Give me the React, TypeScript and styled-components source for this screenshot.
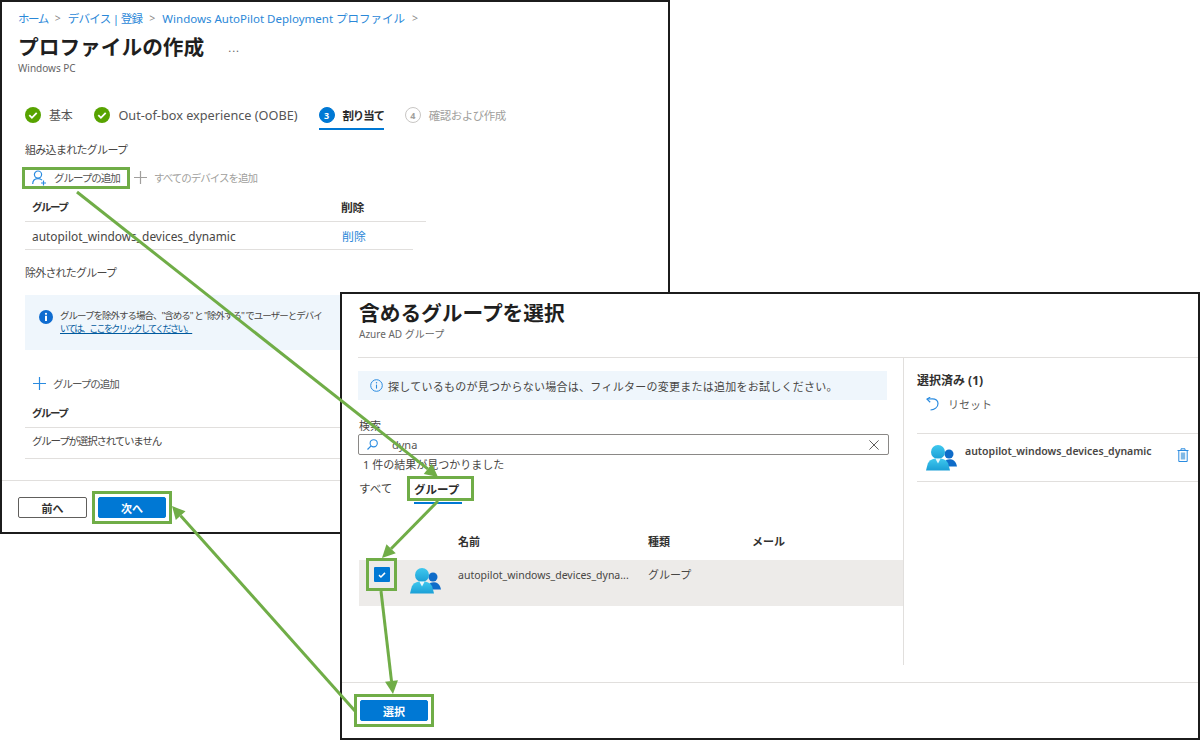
import React from 'react';
import styled, { createGlobalStyle } from 'styled-components';

const GlobalStyle = createGlobalStyle`
  html, body {
    margin: 0;
    padding: 0;
    background: #fff;
  }
  * {
    box-sizing: border-box;
  }
  body {
    font-family: "Noto Sans", "Noto Sans CJK JP", sans-serif;
    color: #3b3a39;
  }
`;

const Stage = styled.div`
  position: relative;
  width: 1200px;
  height: 740px;
  overflow: hidden;
  background: #fff;
`;

const Window = styled.section<{ $left: number; $top: number; $width: number; $height: number }>`
  position: absolute;
  left: ${(p) => p.$left}px;
  top: ${(p) => p.$top}px;
  width: ${(p) => p.$width}px;
  height: ${(p) => p.$height}px;
  display: flex;
  flex-direction: column;
  background: #fff;
  border: 2px solid #1c1c1c;
  overflow: hidden;
`;

const ArrowLayer = styled.svg`
  position: absolute;
  inset: 0;
  width: 1200px;
  height: 740px;
  pointer-events: none;
`;

const Callout = styled.div`
  display: flex;
  align-items: center;
  flex-shrink: 0;
  border: 3px solid #70ad47;
`;

const Tight = styled.span<{ $by: number; $size?: number }>`
  letter-spacing: ${(p) => p.$by}px;
  ${(p) => p.$size && `font-size: ${p.$size}px;`}
`;

/* wizard window */
const PageHead = styled.header`
  margin-top: 4px;
  padding-left: 16px;
`;

const Breadcrumb = styled.nav`
  display: flex;
  align-items: center;
  height: 24px;
  margin-bottom: 3px;
  font-size: 11.5px;
  color: #2b88d8;
`;

const CrumbSep = styled.span`
  margin: 0 7px;
  color: #8a8886;
  font-size: 10.5px;
`;

const TitleRow = styled.div`
  display: flex;
  align-items: center;
  height: 28px;
`;

const PageTitle = styled.h1`
  margin: 0;
  font-size: 20.7px;
  line-height: 28px;
  font-weight: 700;
  color: #1f1f1f;
`;

const MoreDots = styled.span`
  margin-left: 24px;
  font-size: 11px;
  color: #666;
  letter-spacing: 1px;
`;

const SubTitle = styled.div`
  height: 14px;
  font-size: 10px;
  line-height: 14px;
  color: #666;
`;

const Steps = styled.ol`
  display: flex;
  height: 30px;
  margin: 25px 0 0;
  padding: 0 0 0 23px;
  list-style: none;
`;

const Step = styled.li<{ $gap: number; $active?: boolean; $muted?: boolean }>`
  position: relative;
  display: flex;
  align-items: center;
  gap: 8px;
  height: 30px;
  margin-right: ${(p) => p.$gap}px;
  font-size: 12.7px;
  font-weight: ${(p) => (p.$active ? 700 : 400)};
  color: ${(p) => (p.$muted ? '#a19f9d' : p.$active ? '#2b2b2b' : '#555')};
  ${(p) =>
    p.$active &&
    `&::after {
      content: '';
      position: absolute;
      left: 0;
      right: 0;
      bottom: 0;
      height: 2px;
      background: #0078d4;
    }`}
`;

const StepNumber = styled.span<{ $active?: boolean }>`
  display: flex;
  align-items: center;
  justify-content: center;
  width: 16px;
  height: 16px;
  border-radius: 50%;
  font-size: 9px;
  font-weight: 700;
  color: ${(p) => (p.$active ? '#fff' : '#a19f9d')};
  background: ${(p) => (p.$active ? '#0078d4' : '#fff')};
  border: 1px solid ${(p) => (p.$active ? '#0078d4' : '#c8c6c4')};
`;

const SectionLabel = styled.div<{ $top: number; $tight: number }>`
  height: 18px;
  margin: ${(p) => p.$top}px 0 0 23px;
  font-size: 11px;
  line-height: 20px;
  letter-spacing: ${(p) => p.$tight}px;
  color: #484644;
`;

const Toolbar = styled.div`
  display: flex;
  align-items: center;
  height: 29px;
  margin: 5px 0 0 20px;
`;

const ToolButton = styled.div<{ $muted?: boolean; $pad?: number }>`
  display: flex;
  align-items: center;
  gap: 7px;
  padding: 0 ${(p) => p.$pad ?? 0}px;
  font-size: 10.5px;
  letter-spacing: -1px;
  color: ${(p) => (p.$muted ? '#a19f9d' : '#555')};
  white-space: nowrap;
`;

const AddRow = styled.div`
  display: flex;
  align-items: center;
  height: 26px;
  margin: 20px 0 0 31px;
`;

const TableLine = styled.div<{ $width: number; $height: number; $top?: number; $pad?: number; $head?: boolean }>`
  display: grid;
  grid-template-columns: 309px 1fr;
  align-items: center;
  width: ${(p) => p.$width}px;
  height: ${(p) => p.$height}px;
  margin: ${(p) => p.$top ?? 0}px 0 0 23px;
  padding: 0 0 ${(p) => p.$pad ?? 0}px 7px;
  border-bottom: 1px solid #e1dfdd;
  font-size: 11.9px;
  font-weight: ${(p) => (p.$head ? 700 : 400)};
  color: ${(p) => (p.$head ? '#323130' : '#484644')};
`;

const TableLink = styled.span`
  color: #2b88d8;
  padding-left: 1px;
`;

const Notice = styled.div`
  display: flex;
  align-items: flex-start;
  gap: 6px;
  width: 635px;
  height: 55px;
  margin: 14px 0 0 23px;
  padding: 14px 0 0 13px;
  background: #eff6fc;
  font-size: 9.5px;
  line-height: 13px;
  letter-spacing: -1px;
  color: #484644;
`;

const NoticeLink = styled.a`
  font-size: 9px;
  letter-spacing: -1.6px;
  color: #005a9e;
  text-decoration: underline;
`;

const NoticeText = styled.div`
  white-space: nowrap;
`;

const PageFooter = styled.footer<{ $left: number; $top: number; $gap?: number; $height: number }>`
  display: flex;
  align-items: flex-start;
  gap: ${(p) => p.$gap ?? 0}px;
  margin-top: auto;
  padding: ${(p) => p.$top}px 0 0 ${(p) => p.$left}px;
  height: ${(p) => p.$height}px;
  border-top: 1px solid #e1dfdd;
`;

const ActionButton = styled.button<{ $primary?: boolean }>`
  width: ${(p) => (p.$primary ? 68 : 69)}px;
  height: 21px;
  margin: ${(p) => (p.$primary ? '3px' : '6px 0 0')};
  padding: 0;
  border: 1px solid ${(p) => (p.$primary ? '#0078d4' : '#605e5c')};
  border-radius: 2px;
  background: ${(p) => (p.$primary ? '#0078d4' : '#fff')};
  color: ${(p) => (p.$primary ? '#fff' : '#323130')};
  font-family: inherit;
  font-size: 11px;
  font-weight: 700;
`;

/* picker window */
const PickerHead = styled.header`
  height: 64px;
  margin-left: 16px;
  padding: 5px 0 0 1px;
  border-bottom: 1px solid #e1dfdd;
`;

const PickerBody = styled.div`
  display: flex;
  height: 307px;
`;

const ResultsPane = styled.div`
  width: 562px;
  padding-left: 16px;
  border-right: 1px solid #e1dfdd;
`;

const InfoBar = styled.div`
  display: flex;
  align-items: center;
  gap: 5px;
  width: 529px;
  height: 29px;
  margin-top: 13px;
  padding-left: 12px;
  background: #eff6fc;
  font-size: 11px;
  letter-spacing: 0.26px;
  color: #484644;
`;

const FieldLabel = styled.label`
  display: block;
  height: 16px;
  margin: 18px 0 0 1px;
  font-size: 11px;
  line-height: 16px;
  color: #484644;
`;

const SearchBox = styled.div`
  display: flex;
  align-items: center;
  width: 531px;
  height: 21px;
  padding: 0 9px 0 8px;
  border: 1px solid #8a8886;
  border-radius: 2px;
  font-size: 11px;
  color: #555;
`;

const SearchValue = styled.span`
  flex: 1;
  margin-left: 14px;
`;

const ResultCount = styled.div`
  height: 18px;
  margin: 1px 0 0 5px;
  font-size: 11px;
  line-height: 18px;
  color: #484644;
`;

const TabBar = styled.div`
  display: flex;
  align-items: center;
  height: 25px;
  margin-top: 2px;
  padding-left: 1px;
  font-size: 11.5px;
  color: #484644;
`;

const PlainTab = styled.span`
  width: 48px;
  margin-top: -2px;
`;

const ActiveTab = styled(Callout)`
  position: relative;
  width: 67px;
  height: 25px;
  padding-left: 4px;
  font-weight: 700;
  color: #2b2b2b;
  &::after {
    content: '';
    position: absolute;
    left: 4px;
    right: 9px;
    bottom: -6px;
    height: 2px;
    background: #0078d4;
  }
`;

const ListHead = styled.div`
  display: grid;
  grid-template-columns: 190px 104px 1fr;
  align-items: center;
  height: 22px;
  margin-top: 29px;
  padding-left: 100px;
  font-size: 11px;
  font-weight: 700;
  color: #323130;
`;

const ListRow = styled.div`
  display: flex;
  align-items: flex-start;
  height: 46px;
  margin: 8px 0 0 1px;
  padding-left: 7px;
  background: #edebe9;
  font-size: 10.5px;
  line-height: 14px;
  color: #484644;
`;

const CheckCallout = styled(Callout)`
  justify-content: center;
  width: 31px;
  height: 33px;
  margin-top: -2px;
`;

const CheckBox = styled.span`
  display: flex;
  align-items: center;
  justify-content: center;
  width: 16px;
  height: 15px;
  background: #0078d4;
  border-radius: 1px;
`;

const RowAvatar = styled.span`
  margin: 8px 0 0 13px;
`;

const RowName = styled.span`
  width: 171px;
  margin: 8px 0 0 17px;
  white-space: nowrap;
`;

const RowType = styled.span`
  margin: 8px 0 0 19px;
  font-size: 11px;
`;

const SelectedPane = styled.aside`
  flex: 1;
  padding-left: 13px;
`;

const SelectedTitle = styled.div`
  height: 18px;
  margin-top: 14px;
  font-size: 12px;
  line-height: 18px;
  font-weight: 700;
  color: #323130;
`;

const ResetRow = styled.div`
  display: flex;
  align-items: center;
  gap: 9px;
  height: 18px;
  margin-top: 5px;
  padding-left: 9px;
  font-size: 11px;
  color: #605e5c;
`;

const SelectedItem = styled.div`
  display: flex;
  align-items: flex-start;
  height: 49px;
  margin-top: 20px;
  padding-left: 9px;
  border-top: 1px solid #e1dfdd;
  border-bottom: 1px solid #e1dfdd;
  font-size: 10.5px;
  font-weight: 600;
  line-height: 14px;
  color: #484644;
`;

const ItemAvatar = styled.span`
  margin-top: 11px;
`;

const ItemName = styled.span`
  width: 212px;
  margin: 10px 0 0 8px;
  white-space: nowrap;
`;

const ItemDelete = styled.span`
  margin-top: 14px;
`;

const Glyph = styled.svg`
  display: block;
  flex-shrink: 0;
`;

const iconBlue = '#2a8be0';

const CheckCircle = () => (
  <Glyph width="16" height="16" viewBox="0 0 16 16">
    <circle cx="8" cy="8" r="8" fill="#57a300" />
    <path d="M4.3 8.2l2.6 2.6 4.8-5" fill="none" stroke="#fff" strokeWidth="1.8" />
  </Glyph>
);

const PersonAdd = () => (
  <Glyph width="15" height="16" viewBox="0 0 15 16">
    <circle cx="6" cy="4.6" r="3.6" fill="none" stroke={iconBlue} strokeWidth="1.2" />
    <path d="M0.7 14c0-3.4 2.2-5.4 5.3-5.400 1.700 0 3 .5 4 1.500" fill="none" stroke={iconBlue} strokeWidth="1.2" />
    <path d="M11.500 10.500v5M9 13h5" stroke={iconBlue} strokeWidth="1.2" />
  </Glyph>
);

const Plus = ({ color }: { color: string }) => (
  <Glyph width="13" height="13" viewBox="0 0 13 13">
    <path d="M6.500 0v13M0 6.500h13" stroke={color} strokeWidth="1.200" />
  </Glyph>
);

const InfoSolid = () => (
  <Glyph width="16" height="16" viewBox="0 0 16 16">
    <circle cx="8" cy="8" r="7" fill="#0f6cd0" />
    <rect x="7" y="6.800" width="2" height="5.200" fill="#fff" />
    <circle cx="8" cy="4.800" r="1.100" fill="#fff" />
  </Glyph>
);

const InfoOutline = () => (
  <Glyph width="13" height="13" viewBox="0 0 13 13">
    <circle cx="6.500" cy="6.500" r="5.800" fill="none" stroke={iconBlue} strokeWidth="1" />
    <path d="M6.500 5.600v4" stroke={iconBlue} strokeWidth="1.100" />
    <circle cx="6.500" cy="3.800" r=".7" fill={iconBlue} />
  </Glyph>
);

const SearchGlyph = () => (
  <Glyph width="11" height="11" viewBox="0 0 11 11">
    <circle cx="6.700" cy="4.300" r="3.600" fill="none" stroke={iconBlue} strokeWidth="1.100" />
    <path d="M4.100 6.900L.5 10.500" stroke={iconBlue} strokeWidth="1.200" />
  </Glyph>
);

const CloseGlyph = () => (
  <Glyph width="10" height="10" viewBox="0 0 10 10">
    <path d="M.4.4l9.200 9.200M9.600.4L.4 9.600" stroke="#605e5c" strokeWidth="1" />
  </Glyph>
);

const TickGlyph = () => (
  <Glyph width="8" height="6" viewBox="0 0 10 8">
    <path d="M1 4.200l2.600 2.400L9 1.200" fill="none" stroke="#fff" strokeWidth="2" />
  </Glyph>
);

const UndoGlyph = () => (
  <Glyph width="13" height="14" viewBox="0 0 13 14">
    <path d="M4.500 13c4-.4 7.500-2.700 7.500-6.500C12 3.500 9.500 1.800 6.500 1.800L1.200 2" fill="none" stroke={iconBlue} strokeWidth="1.200" />
    <path d="M4.200.2L1 2.200l3.200 3" fill="none" stroke={iconBlue} strokeWidth="1.200" />
  </Glyph>
);

const TrashGlyph = () => (
  <Glyph width="12" height="14" viewBox="0 0 12 14">
    <path d="M.5 2.500h11M4 2.500V.8h4v1.700M1.800 2.500v11h8.400v-11" fill="none" stroke={iconBlue} strokeWidth="1" />
    <rect x="3.800" y="4.500" width="4.400" height="7" fill="#7fb8e6" />
  </Glyph>
);

const GroupGlyph = ({ id }: { id: string }) => (
  <Glyph width="31" height="26" viewBox="0 0 31 26">
    <defs>
      <linearGradient id={id} x1="0" y1="0" x2="0" y2="1">
        <stop offset="0" stopColor="#3fc8ee" />
        <stop offset="1" stopColor="#1b9fd6" />
      </linearGradient>
    </defs>
    <circle cx="23" cy="9" r="4.500" fill="#0f6cc9" />
    <path d="M20 21.500V15q3-1 6-.5 4 1.500 5 7z" fill="#0f6cc9" />
    <circle cx="12" cy="7" r="7" fill={`url(#${id})`} />
    <path d="M0 25.500L1.800 18.500Q3.500 14.500 9 13.500H15Q20.500 14.500 22.200 18.500L24 25.500z" fill={`url(#${id})`} />
    <path d="M9.300 13.500L12 18.500l2.700-5z" fill="#e8f7fc" />
  </Glyph>
);

const Arrow = ({ from, to }: { from: [number, number]; to: [number, number] }) => {
  const [x1, y1] = from;
  const [x2, y2] = to;
  const a = Math.atan2(y2 - y1, x2 - x1);
  const len = 13;
  const wing = 6.500;
  const bx = x2 - len * Math.cos(a);
  const by = y2 - len * Math.sin(a);
  const nx = -Math.sin(a) * wing;
  const ny = Math.cos(a) * wing;
  return (
    <g>
      <line x1={x1} y1={y1} x2={bx} y2={by} stroke="#70ad47" strokeWidth="3" />
      <polygon points={`${x2},${y2} ${bx + nx},${by + ny} ${bx - nx},${by - ny}`} fill="#70ad47" />
    </g>
  );
};

export default function App() {
  return (
    <Stage>
      <GlobalStyle />
      <Window $left={0} $top={0} $width={670} $height={534}>
        <PageHead>
          <Breadcrumb>
            <Tight $by={-1.500}>ホーム</Tight>
            <CrumbSep>&gt;</CrumbSep>
            <Tight $by={-0.7}>デバイス | 登録</Tight>
            <CrumbSep>&gt;</CrumbSep>
            Windows AutoPilot Deployment プロファイル
            <CrumbSep>&gt;</CrumbSep>
          </Breadcrumb>
          <TitleRow>
            <PageTitle>プロファイルの作成</PageTitle>
            <MoreDots>...</MoreDots>
          </TitleRow>
          <SubTitle>Windows PC</SubTitle>
        </PageHead>
        <Steps>
          <Step $gap={22}>
            <CheckCircle />
            <Tight $by={-0.3} $size={12}>基本</Tight>
          </Step>
          <Step $gap={21}>
            <CheckCircle />
            Out-of-box experience (OOBE)
          </Step>
          <Step $gap={21} $active>
            <StepNumber $active>3</StepNumber>
            <Tight $by={-1.200} $size={11.500}>割り当て</Tight>
          </Step>
          <Step $gap={0} $muted>
            <StepNumber>4</StepNumber>
            <Tight $by={-0.5} $size={11.500}>確認および作成</Tight>
          </Step>
        </Steps>
        <SectionLabel $top={10} $tight={-0.7}>
          組み込まれたグループ
        </SectionLabel>
        <Toolbar>
          <Callout>
            <ToolButton $pad={7}>
              <PersonAdd />
              グループの追加
            </ToolButton>
          </Callout>
          <ToolButton $muted $pad={4}>
            <Plus color="#a19f9d" />
            すべてのデバイスを追加
          </ToolButton>
        </Toolbar>
        <TableLine $width={401} $height={30} $pad={1} $head>
          <Tight $by={-1.500} $size={10.500}>グループ</Tight>
          <Tight $by={-0.5}>削除</Tight>
        </TableLine>
        <TableLine $width={388} $height={28}>
          <span>autopilot_windows_devices_dynamic</span>
          <TableLink>削除</TableLink>
        </TableLine>
        <SectionLabel $top={13} $tight={-0.8}>
          除外されたグループ
        </SectionLabel>
        <Notice>
          <InfoSolid />
          <NoticeText>
            グループを除外する場合、"含める" と "除外する" でユーザーとデバイ
            <br />
            <NoticeLink>いては、ここをクリックしてください。</NoticeLink>
          </NoticeText>
        </Notice>
        <AddRow>
          <ToolButton>
            <Plus color={iconBlue} />
            グループの追加
          </ToolButton>
        </AddRow>
        <TableLine $width={640} $height={30} $top={2} $pad={1} $head>
          <Tight $by={-1.500} $size={10.500}>グループ</Tight>
        </TableLine>
        <TableLine $width={640} $height={31} $pad={6}>
          <Tight $by={-1.200} $size={10.500}>グループが選択されていません</Tight>
        </TableLine>
        <PageFooter $left={16} $top={10} $gap={5} $height={52}>
          <ActionButton>前へ</ActionButton>
          <Callout>
            <ActionButton $primary>次へ</ActionButton>
          </Callout>
        </PageFooter>
      </Window>

      <Window $left={340} $top={292} $width={860} $height={448}>
        <PickerHead>
          <TitleRow>
            <PageTitle>含めるグループを選択</PageTitle>
          </TitleRow>
          <SubTitle>Azure AD グループ</SubTitle>
        </PickerHead>
        <PickerBody>
          <ResultsPane>
            <InfoBar>
              <InfoOutline />
              探しているものが見つからない場合は、フィルターの変更または追加をお試しください。
            </InfoBar>
            <FieldLabel>検索</FieldLabel>
            <SearchBox>
              <SearchGlyph />
              <SearchValue>dyna</SearchValue>
              <CloseGlyph />
            </SearchBox>
            <ResultCount>1 件の結果が見つかりました</ResultCount>
            <TabBar>
              <PlainTab>すべて</PlainTab>
              <ActiveTab>グループ</ActiveTab>
            </TabBar>
            <ListHead>
              <span>名前</span>
              <span>種類</span>
              <span>メール</span>
            </ListHead>
            <ListRow>
              <CheckCallout>
                <CheckBox>
                  <TickGlyph />
                </CheckBox>
              </CheckCallout>
              <RowAvatar>
                <GroupGlyph id="row-group" />
              </RowAvatar>
              <RowName>autopilot_windows_devices_dyna...</RowName>
              <RowType>グループ</RowType>
            </ListRow>
          </ResultsPane>
          <SelectedPane>
            <SelectedTitle>選択済み (1)</SelectedTitle>
            <ResetRow>
              <UndoGlyph />
              リセット
            </ResetRow>
            <SelectedItem>
              <ItemAvatar>
                <GroupGlyph id="item-group" />
              </ItemAvatar>
              <ItemName>autopilot_windows_devices_dynamic</ItemName>
              <ItemDelete>
                <TrashGlyph />
              </ItemDelete>
            </SelectedItem>
          </SelectedPane>
        </PickerBody>
        <PageFooter $left={12} $top={11} $height={56}>
          <Callout>
            <ActionButton $primary>選択</ActionButton>
          </Callout>
        </PageFooter>
      </Window>

      <ArrowLayer viewBox="0 0 1200 740">
        <Arrow from={[77, 192]} to={[438, 477]} />
        <Arrow from={[438, 501]} to={[382, 558]} />
        <Arrow from={[381, 591]} to={[393, 694]} />
        <Arrow from={[355, 711]} to={[172, 506]} />
      </ArrowLayer>
    </Stage>
  );
}
